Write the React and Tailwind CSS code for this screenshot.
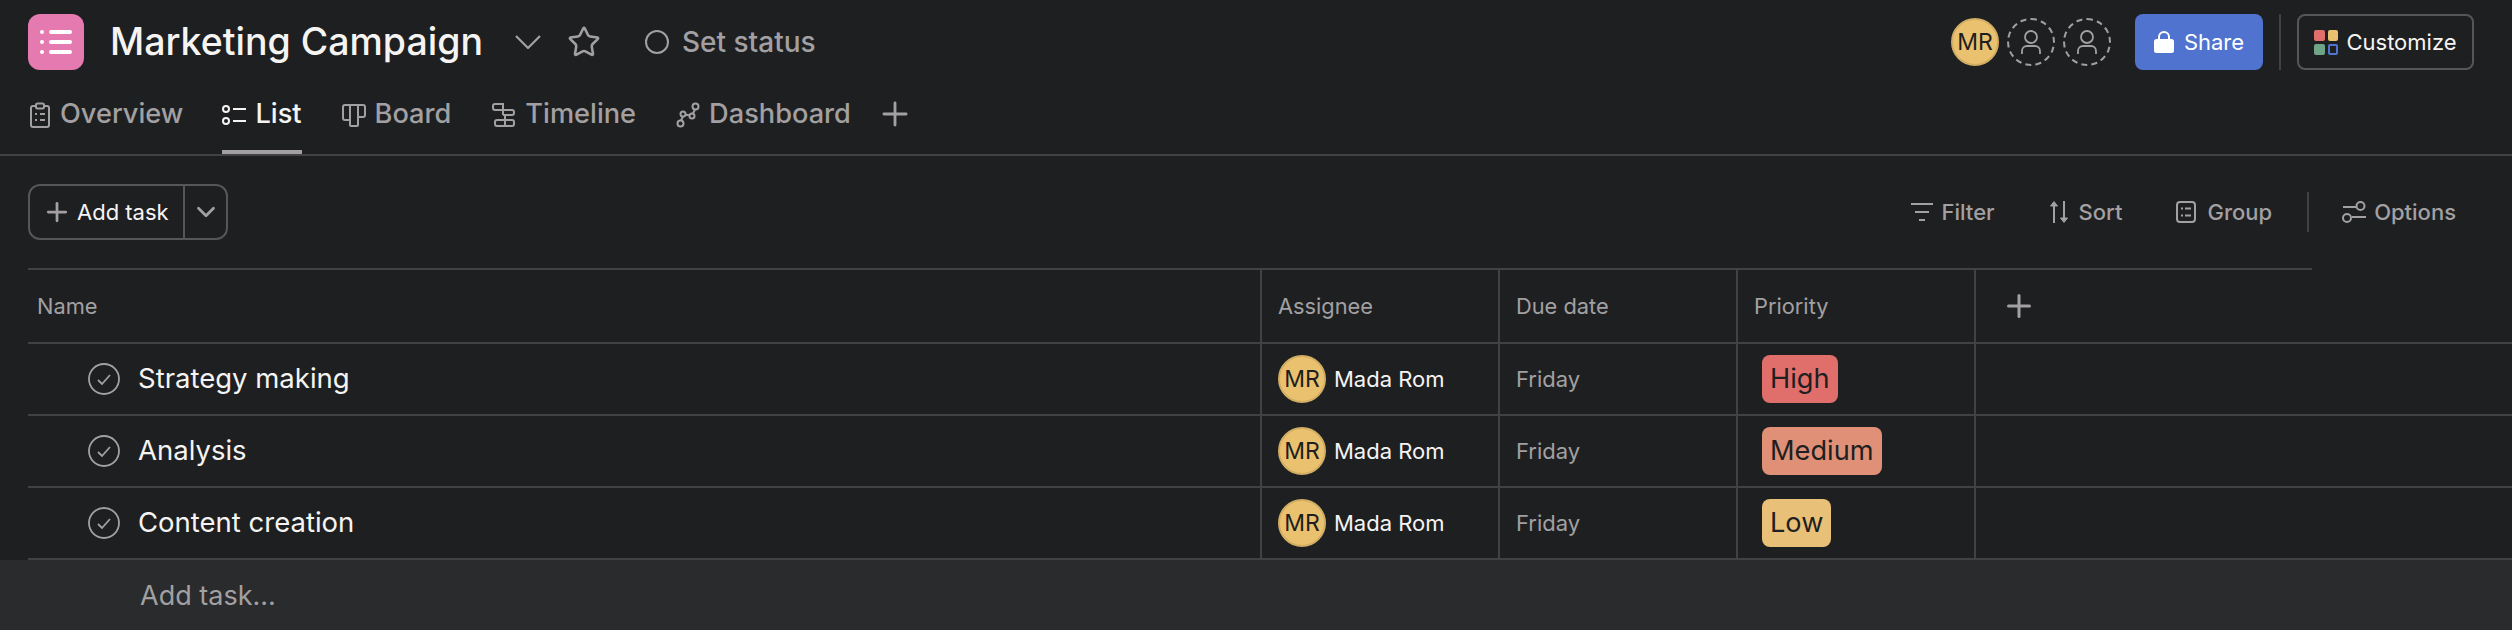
import React from "react";
import { ChevronDown, Plus, Star } from "lucide-react";

const rows = [
  { name: "Strategy making", priority: "High", color: "bg-[#e06f6c]" },
  { name: "Analysis", priority: "Medium", color: "bg-[#df9077]" },
  { name: "Content creation", priority: "Low", color: "bg-[#e9c077]" },
];

const OverviewIcon = () => (
  <svg width="20" height="26" viewBox="0 0 20 26" fill="none" stroke="currentColor" strokeWidth="2">
    <path d="M6 4H3a2 2 0 0 0-2 2v17a2 2 0 0 0 2 2h14a2 2 0 0 0 2-2V6a2 2 0 0 0-2-2h-3" />
    <rect x="6" y="1.5" width="8" height="5" rx="1.5" />
    <path d="M10 12h5M10 18h5M5 12h2M5 18h2" />
  </svg>
);

const ListIcon = () => (
  <svg width="24" height="22" viewBox="0 0 24 22" fill="none" stroke="currentColor" strokeWidth="2">
    <circle cx="4" cy="5" r="3" />
    <circle cx="4" cy="17" r="3" />
    <path d="M11 5h13M11 17h13" />
  </svg>
);

const BoardIcon = () => (
  <svg width="24" height="24" viewBox="0 0 24 24" fill="none" stroke="currentColor" strokeWidth="2">
    <path d="M8 2H3a2 2 0 0 0-2 2v11a2 2 0 0 0 2 2h5zM8 2h8v20a1 1 0 0 1-1 1H9a1 1 0 0 1-1-1zM16 2h5a2 2 0 0 1 2 2v8a2 2 0 0 1-2 2h-5z" />
  </svg>
);

const TimelineIcon = () => (
  <svg width="24" height="26" viewBox="0 0 24 26" fill="none" stroke="currentColor" strokeWidth="2">
    <path d="M11 2H3a2 2 0 0 0-2 2v2a2 2 0 0 0 2 2h8M11 1v12M11 8h9a2 2 0 0 1 2 2v1a2 2 0 0 1-2 2h-9M13 13v12M13 18H5a2 2 0 0 0-2 2v2a2 2 0 0 0 2 2h8M13 18h7a2 2 0 0 1 2 2v2a2 2 0 0 1-2 2h-7" />
  </svg>
);

const DashboardIcon = () => (
  <svg width="24" height="26" viewBox="0 0 24 26" fill="none" stroke="currentColor" strokeWidth="2">
    <circle cx="4.500" cy="21.500" r="3" />
    <circle cx="19.500" cy="4.500" r="3" />
    <circle cx="7" cy="12" r="2.500" />
    <circle cx="16" cy="14" r="2.500" />
    <path d="M5 18.500l2-4M9 12.500l5 1M17 11.500l2-4" />
  </svg>
);

const LockIcon = () => (
  <svg width="20" height="22" viewBox="0 0 20 22" fill="white">
    <path d="M4 9V6a6 6 0 0 1 12 0v3h-2V6a4 4 0 0 0-8 0v3z" />
    <rect x="0" y="8" width="20" height="14" rx="2.500" />
  </svg>
);

const PersonIcon = () => (
  <svg width="24" height="26" viewBox="0 0 24 26" fill="none" stroke="#a2a0a2" strokeWidth="1.800">
    <circle cx="12" cy="8" r="6" />
    <path d="M3 25v-3a5 5 0 0 1 5-5h8a5 5 0 0 1 5 5v3" />
  </svg>
);

const FilterIcon = () => (
  <svg width="24" height="20" viewBox="0 0 24 20" fill="none" stroke="currentColor" strokeWidth="2">
    <path d="M1 2h22M5 10h14M9 18h6" />
  </svg>
);

const SortIcon = () => (
  <svg width="20" height="24" viewBox="0 0 20 24" fill="currentColor" stroke="currentColor" strokeWidth="2">
    <path d="M5 23V3" fill="none" />
    <path d="M1.500 6 5 1.500 8.500 6z" strokeWidth="1" />
    <path d="M15 1v20" fill="none" />
    <path d="M11.500 18 15 22.500 18.500 18z" strokeWidth="1" />
  </svg>
);

const GroupIcon = () => (
  <svg width="20" height="22" viewBox="0 0 20 22" fill="none" stroke="currentColor" strokeWidth="2">
    <rect x="1" y="1" width="18" height="20" rx="3" />
    <path d="M9 7.500h6M9 14.500h6M5 7.500h2M5 14.500h2" />
  </svg>
);

const OptionsIcon = () => (
  <svg width="24" height="22" viewBox="0 0 24 22" fill="none" stroke="currentColor" strokeWidth="2">
    <circle cx="18.500" cy="5" r="4" />
    <circle cx="5" cy="17" r="4" />
    <path d="M1 6h13M10 16h14" />
  </svg>
);

const CheckCircle = () => (
  <svg width="32" height="32" viewBox="0 0 32 32" fill="none" stroke="#a2a0a2" strokeWidth="1.800">
    <circle cx="16" cy="16" r="15" />
    <path d="m10 17 4 4 8-9" />
  </svg>
);

const Avatar = () => (
  <div className="flex h-12 w-12 shrink-0 items-center justify-center rounded-full border-2 border-[#d2ad64] bg-[#eac16f] text-[23px] text-[#1e1f21]">
    MR
  </div>
);

function Tab({ icon, label, active, className, gap = "gap-[9px]" }) {
  return (
    <div
      className={`flex h-full items-center border-b-4 pt-[9px] ${gap} ${
        active ? "border-[#a2a0a2] text-[#f5f4f3]" : "border-transparent text-[#a2a0a2]"
      } ${className}`}
    >
      {icon}
      <span className="text-[27.2px] font-medium">{label}</span>
    </div>
  );
}

function Tool({ icon, label, className }) {
  return (
    <div className={`flex items-center text-[#a2a0a2] ${className}`}>
      {icon}
      <span className="text-[22px] font-medium">{label}</span>
    </div>
  );
}

export default function App() {
  return (
    <div className="h-[630px] w-full overflow-hidden bg-[#1e1f21] font-['Inter',sans-serif] text-[#f5f4f3]">
      {/* Project header */}
      <div className="flex h-[70px] items-end pl-7 pr-[38px]">
        <div className="flex h-14 w-14 flex-col items-center justify-center gap-[6px] rounded-xl bg-[#e57ab0]">
          {[0, 1, 2].map((i) => (
            <div key={i} className="flex items-center gap-[5px]">
              <div className="h-1 w-1 rounded-full bg-white" />
              <div className="h-1 w-[23px] rounded-sm bg-white" />
            </div>
          ))}
        </div>
        <div className="ml-[26px] flex h-14 items-center text-[37.5px] font-medium">Marketing Campaign</div>
        <div className="ml-[32px] flex h-14 items-center text-[#a2a0a2]">
          <svg width="26" height="14" viewBox="0 0 26 14" fill="none" stroke="currentColor" strokeWidth="2.200">
            <path d="m1 1 12 12L25 1" />
          </svg>
        </div>
        <div className="ml-[26px] flex h-14 items-center text-[#a2a0a2]">
          <Star size={34} strokeWidth={1.800} />
        </div>
        <div className="ml-[44px] flex h-14 items-center gap-[13px] text-[#a2a0a2]">
          <div className="h-6 w-6 rounded-full border-2 border-[#a2a0a2]" />
          <span className="text-[28px] font-medium">Set status</span>
        </div>

        <div className="ml-auto flex h-14 items-center">
          <Avatar />
          <div className="ml-2 flex h-12 w-12 items-center justify-center rounded-full border-2 border-dashed border-[#a2a0a2]">
            <PersonIcon />
          </div>
          <div className="ml-2 flex h-12 w-12 items-center justify-center rounded-full border-2 border-dashed border-[#a2a0a2]">
            <PersonIcon />
          </div>
          <div className="ml-6 flex h-14 w-[128px] items-center justify-center gap-[10px] rounded-lg bg-[#4f73cf] text-[22px] text-white">
            <LockIcon />
            Share
          </div>
          <div className="mx-4 h-14 w-0.5 bg-[#424244]" />
          <div className="flex h-14 w-[177px] items-center justify-center gap-2 rounded-lg border-2 border-[#565557] text-[22px]">
            <div className="grid grid-cols-2 gap-[3px]">
              <div className="h-[11px] w-[10.500px] rounded-[2px] bg-[#e06f6c]" />
              <div className="h-[11px] w-[10.500px] rounded-[2px] bg-[#eac16f]" />
              <div className="h-[11px] w-[10.500px] rounded-[2px] bg-[#6fa586]" />
              <div className="h-[11px] w-[10.500px] rounded-[2px] border-2 border-[#4f73cf]" />
            </div>
            Customize
          </div>
        </div>
      </div>

      {/* Tabs */}
      <div className="flex h-[86px] items-stretch border-b-2 border-[#424244] pl-[30px]">
        <Tab icon={<OverviewIcon />} label="Overview" gap="gap-[10px]" />
        <Tab icon={<ListIcon />} label="List" active className="ml-[39px]" />
        <Tab icon={<BoardIcon />} label="Board" className="ml-[40px]" />
        <Tab icon={<TimelineIcon />} label="Timeline" className="ml-[41px]" />
        <Tab icon={<DashboardIcon />} label="Dashboard" className="ml-[40px]" />
        <div className="ml-[25px] flex items-center pt-[3px] text-[#a2a0a2]">
          <Plus size={38} strokeWidth={1.800} />
        </div>
      </div>

      {/* Toolbar */}
      <div className="flex h-[112px] items-start pl-7 pr-[56px] pt-[28px]">
        <div className="flex h-14 w-[200px] items-stretch rounded-xl border-2 border-[#565557]">
          <div className="flex w-[155px] items-center gap-[5px] border-r-2 border-[#565557] pl-[12px] text-[22px]">
            <Plus size={30} strokeWidth={2.200} className="text-[#a2a0a2]" />
            Add task
          </div>
          <div className="flex flex-1 items-center justify-center text-[#a2a0a2]">
            <ChevronDown size={30} strokeWidth={2.200} />
          </div>
        </div>
        <div className="ml-auto flex h-14 items-center">
          <Tool icon={<FilterIcon />} label="Filter" className="gap-2" />
          <Tool icon={<SortIcon />} label="Sort" className="ml-[54px] gap-[10px]" />
          <Tool icon={<GroupIcon />} label="Group" className="ml-[54px] gap-[11px]" />
          <div className="ml-[35px] mr-[33px] h-10 w-0.5 bg-[#424244]" />
          <Tool icon={<OptionsIcon />} label="Options" className="gap-2" />
        </div>
      </div>

      {/* Task table */}
      <div className="ml-7">
        <div className="h-0.5 w-[2284px] bg-[#424244]" />
        <div className="grid h-[74px] grid-cols-[1232px_238px_238px_238px_1fr] border-b-2 border-[#424244] text-[21.800px] text-[#a2a0a2]">
          <div className="flex items-center pl-[9px]">Name</div>
          <div className="flex items-center border-l-2 border-[#424244] pl-4">Assignee</div>
          <div className="flex items-center border-l-2 border-[#424244] pl-4">Due date</div>
          <div className="flex items-center border-l-2 border-[#424244] pl-4">Priority</div>
          <div className="flex items-center border-l-2 border-[#424244] pl-[25px]">
            <Plus size={36} strokeWidth={2} />
          </div>
        </div>
        {rows.map((row) => (
          <div
            key={row.name}
            className="grid h-[72px] grid-cols-[1232px_238px_238px_238px_1fr] border-b-2 border-[#424244]"
          >
            <div className="flex items-center gap-[18px] pl-[60px] text-[27.5px]">
              <CheckCircle />
              {row.name}
            </div>
            <div className="flex items-center gap-2 border-l-2 border-[#424244] pl-4 text-[22px]">
              <Avatar />
              Mada Rom
            </div>
            <div className="flex items-center border-l-2 border-[#424244] pl-4 text-[22px] text-[#a2a0a2]">
              Friday
            </div>
            <div className="flex items-center border-l-2 border-[#424244] pl-6">
              <div className={`flex h-12 items-center rounded-lg px-2 text-[27.2px] text-[#1e1f21] ${row.color}`}>
                {row.priority}
              </div>
            </div>
            <div className="border-l-2 border-[#424244]" />
          </div>
        ))}
      </div>
      <div className="flex h-[70px] items-center bg-[#2a2b2d] pl-[140px] pt-[2px] text-[27px] text-[#a2a0a2]">
        Add task...
      </div>
    </div>
  );
}
